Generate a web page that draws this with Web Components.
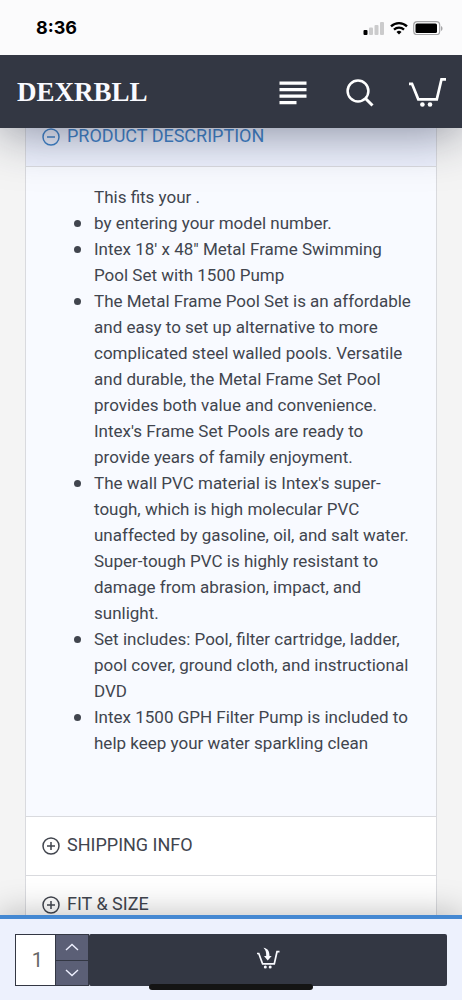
<!DOCTYPE html>
<html lang="en">
<head>
<meta charset="utf-8">
<meta name="viewport" content="width=device-width, initial-scale=1">
<title>DEXRBLL</title>
<style>
  body { margin: 0; font-family: Roboto, "Liberation Sans", sans-serif; color: #41454e; background: #f4f4f4; }
</style>
</head>
<body>
<product-page></product-page>
<script>
const define = (name, html, setup) => customElements.define(name, class extends HTMLElement {
  constructor() {
    super();
    const t = document.createElement('template');
    t.innerHTML = html;
    this.attachShadow({ mode: 'open' }).append(t.content.cloneNode(true));
    if (setup) setup(this, this.shadowRoot);
  }
});

define('status-bar', `
<style>
  :host { display: flex; flex: none; position: relative; z-index: 3; box-sizing: border-box; height: 55px; padding: 0 19px 0 36px; align-items: center; justify-content: space-between; background: #fbfbfc; color: #000; font: 700 18px/24px Inter, sans-serif; }
  div { display: flex; gap: 5px; align-items: center; }
  svg { display: block; }
</style>
<time>8:36</time>
<div>
  <svg width="22" height="14" viewBox="0 0 22 14" role="img" aria-label="Signal"><rect x="0.500" y="9" width="4" height="5" rx="1"/><g fill="#cbcbcc"><rect x="6" y="6.500" width="4" height="7.500" rx="1"/><rect x="11.500" y="4" width="4" height="10" rx="1"/><rect x="17" y="1" width="4" height="13" rx="1"/></g></svg>
  <svg width="18" height="14" viewBox="0 0 18 14" fill="none" stroke="#000" stroke-width="2.300" role="img" aria-label="Wi-Fi"><path d="M1 5.300a11.500 11.500 0 0 1 16 0M4 8.600a7.300 7.300 0 0 1 10 0"/><path d="M9 13.500 6.500 11a3.600 3.600 0 0 1 5 0z" fill="#000" stroke="none"/></svg>
  <svg width="30" height="14" viewBox="0 0 30 14" role="img" aria-label="Battery"><rect x="0.700" y="0.700" width="26" height="13" rx="3.500" fill="#fff" stroke="#a5a5a7" stroke-width="1.200"/><rect x="2.500" y="2.500" width="21.500" height="9.500" rx="1.500"/><path d="M28 5v5c2-.8 2-4.200 0-5z" fill="#a5a5a7"/></svg>
</div>`);

define('site-header', `
<style>
  :host { display: flex; flex: none; position: relative; z-index: 2; box-sizing: border-box; height: 73px; padding: 0 15px 0 17px; align-items: center; justify-content: space-between; background: #333743; box-shadow: 0 4px 50px rgba(30, 35, 60, .5); }
  a { color: #f9faff; text-decoration: none; font: 700 27px/32px "Liberation Serif", serif; }
  nav { display: flex; gap: 35px; align-items: center; }
  button { display: block; padding: 0; border: 0; background: none; color: #fff; }
  svg { display: block; }
</style>
<a href="#">DEXRBLL</a>
<nav>
  <button aria-label="Menu"><svg width="28" height="30" viewBox="0 0 28 30" fill="currentColor"><path d="M0.500 4.500h27v3.200h-27zM0.500 11h27v3.200h-27zM0.500 17.500h27v3.200h-27zM0.500 24h17v3.200h-17z"/></svg></button>
  <button aria-label="Search"><svg width="32" height="30" viewBox="-3 0 32 30" fill="none" stroke="currentColor" stroke-width="2.500"><circle cx="13" cy="14" r="10.400"/><path d="M20.500 21.500l7 7" stroke-width="3"/></svg></button>
  <button aria-label="Cart"><svg width="38" height="30" viewBox="0 0 38 30" fill="none" stroke="currentColor" stroke-width="2.700"><path d="M0 6.800h3l6.300 15.500h18.500L32.500 2.300H37"/><circle cx="13.400" cy="27.500" r="2.300" fill="currentColor" stroke="none"/><circle cx="21" cy="27.500" r="2.300" fill="currentColor" stroke="none"/></svg></button>
</nav>`);

define('accordion-panel', `
<style>
  :host { display: block; border-bottom: 1px solid #d9dade; background: #fff; }
  h2 { margin: 0; font: inherit; }
  button { display: flex; box-sizing: border-box; width: 100%; height: 58px; padding: 0 16px 2px; gap: 6px; align-items: center; border: 0; background: none; color: inherit; font: 18px/20px Roboto, sans-serif; text-transform: uppercase; text-align: left; }
  svg { display: block; flex: none; }
  .body { display: none; }
  :host([open]) button { background: #edf1fd; color: #3f83c9; border-bottom: 1px solid #d9dade; height: 59px; }
  :host([open]) .body { display: block; padding: 17px 16px 60px 28px; background: #f8faff; font-size: 17px; line-height: 26px; }
  :host([open]) .v { display: none; }
</style>
<h2><button><svg width="19" height="20" viewBox="0 0 19 20" fill="none" stroke="currentColor" stroke-width="1.500" aria-hidden="true"><circle cx="9" cy="11" r="8"/><path d="M5 11h8"/><path class="v" d="M9 7v8"/></svg><span><slot name="title"></slot></span></button></h2>
<div class="body"><slot></slot></div>`, (el, root) => {
  const b = root.querySelector('button');
  b.addEventListener('click', () => el.toggleAttribute('open'));
});

define('product-features', `
<style>
  :host { display: block; }
  ul { margin: 0; padding: 0 0 0 40px; list-style: none; }
  li:not(.plain)::before { content: ""; display: inline-block; width: 7px; height: 7px; margin: 0 13px 2px -20px; border-radius: 50%; background: currentColor; }
</style>
<ul>
  <li class="plain">This fits your .</li>
  <li>by entering your model number.</li>
  <li>Intex 18' x 48" Metal Frame Swimming Pool Set with 1500 Pump</li>
  <li>The Metal Frame Pool Set is an affordable and easy to set up alternative to more complicated steel walled pools. Versatile and durable, the Metal Frame Set Pool provides both value and convenience. Intex's Frame Set Pools are ready to provide years of family enjoyment.</li>
  <li>The wall PVC material is Intex's super-tough, which is high molecular PVC unaffected by gasoline, oil, and salt water. Super-tough PVC is highly resistant to damage from abrasion, impact, and sunlight.</li>
  <li>Set includes: Pool, filter cartridge, ladder, pool cover, ground cloth, and instructional DVD</li>
  <li>Intex 1500 GPH Filter Pump is included to help keep your water sparkling clean</li>
</ul>`);

define('purchase-bar', `
<style>
  :host { display: flex; flex: none; position: relative; z-index: 2; box-sizing: border-box; height: 85px; padding: 15px 15px 14px; border-top: 4px solid #4488d2; background: #edf1fd; box-shadow: 0 0 35px rgba(0, 0, 0, .28); }
  input { box-sizing: border-box; width: 41px; height: 52px; padding: 0 12px 0 0; border: 1px solid #333743; border-radius: 0; background: #fff; color: #666; font: 20px/26px Roboto, sans-serif; text-align: right; outline: 0; }
  .steps { display: grid; box-sizing: border-box; width: 33px; height: 52px; gap: 1px; border: 1px solid #333743; border-left: 0; background: #333743; }
  button { display: flex; align-items: center; justify-content: center; padding: 0; border: 0; background: #5b5f76; color: #eef0ff; }
  .add { flex: 1; height: 52px; border-radius: 2px; background: #333743; }
  svg { display: block; }
  .add svg { margin-bottom: 4px; }
  .home { position: absolute; left: 50%; bottom: 10px; width: 164px; height: 6px; margin-left: -82px; border-radius: 3px; background: #141414; }
</style>
<input type="text" inputmode="numeric" value="1" aria-label="Quantity">
<div class="steps">
  <button class="up" aria-label="Increase quantity"><svg width="14" height="8" viewBox="0 0 14 8" fill="none" stroke="currentColor" stroke-width="1.400"><path d="M1 7l6-5.500L13 7"/></svg></button>
  <button class="down" aria-label="Decrease quantity"><svg width="14" height="8" viewBox="0 0 14 8" fill="none" stroke="currentColor" stroke-width="1.400"><path d="M1 1l6 5.500L13 1"/></svg></button>
</div>
<button class="add" aria-label="Add to cart"><svg width="24" height="22" viewBox="0 0 24 22" fill="none" stroke="#f9faff" stroke-width="1.700"><path d="M1 6.500h1.800l3.800 10.300h11.700L21 4.700h2.500"/><circle cx="9.300" cy="20" r="1.500" fill="#f9faff" stroke="none"/><circle cx="14.200" cy="20" r="1.500" fill="#f9faff" stroke="none"/><path d="M7.500.8c4.200.7 6 3.200 6 8.200h2.200l-4 4.500L8 9h2.200C10.300 5.500 9.700 3 7.500.8z" fill="#f9faff" stroke="none"/></svg></button>
<div class="home"></div>`, (el, root) => {
  const q = root.querySelector('input');
  root.querySelector('.up').addEventListener('click', () => q.value = Number(q.value) + 1);
  root.querySelector('.down').addEventListener('click', () => q.value = Math.max(1, q.value - 1));
});

define('product-page', `
<style>
  :host { display: flex; flex-direction: column; height: 100vh; overflow: hidden; }
  main { flex: 1; min-height: 0; overflow: hidden; padding: 0 25px; }
  .accordion { margin-top: -20px; border: 1px solid #d9dade; border-top: 0; }
</style>
<status-bar></status-bar>
<site-header></site-header>
<main>
  <div class="accordion">
    <accordion-panel open><span slot="title">Product Description</span><product-features></product-features></accordion-panel>
    <accordion-panel><span slot="title">Shipping Info</span></accordion-panel>
    <accordion-panel><span slot="title">Fit &amp; Size</span></accordion-panel>
  </div>
</main>
<purchase-bar></purchase-bar>`);
</script>
</body>
</html>
